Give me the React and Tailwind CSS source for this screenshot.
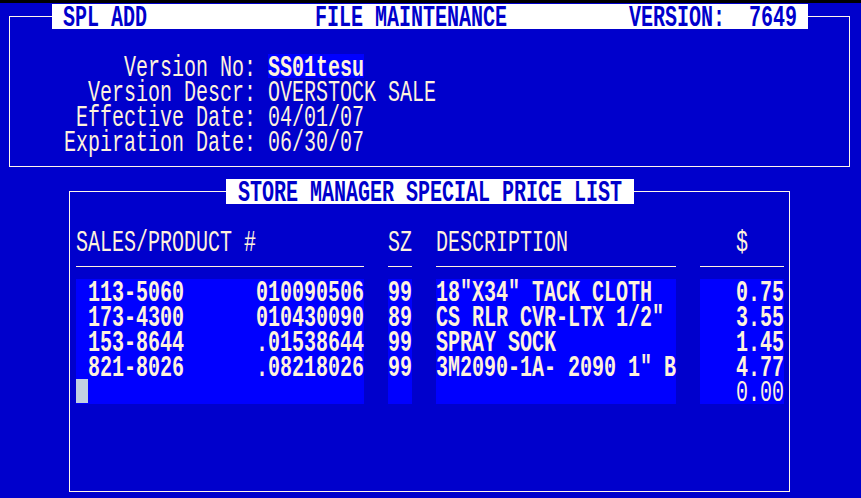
import React from "react";

function T({ children, bold }) {
  return (
    <span
      className={
        bold
          ? "inline-block h-[16px] leading-[16px] whitespace-pre scale-y-150 translate-y-[1.5px] font-bold"
          : "inline-block h-[16px] leading-[16px] whitespace-pre scale-y-150 translate-y-[1.5px]"
      }
    >
      {children}
    </span>
  );
}

const rows = [
  ["113-5060", "010090506", "99", '18"X34" TACK CLOTH', "0.75"],
  ["173-4300", "010430090", "89", 'CS RLR CVR-LTX 1/2"', "3.55"],
  ["153-8644", ".01538644", "99", "SPRAY SOCK", "1.45"],
  ["821-8026", ".08218026", "99", '3M2090-1A- 2090 1" B', "4.77"],
];

const fields = [
  ["Version No:", "SS01tesu", true],
  ["Version Descr:", "OVERSTOCK SALE", false],
  ["Effective Date:", "04/01/07", false],
  ["Expiration Date:", "06/30/07", false],
];

export default function App() {
  return (
    <div className="w-[861px] h-[498px] overflow-hidden bg-[#0000cc] text-[#fff2dc] font-['Liberation_Mono',monospace] text-[20px] leading-[25px]">
      <div className="h-[3px] bg-black" />

      {/* Top panel */}
      <fieldset className="mt-[1px] ml-[9px] w-[841px] border border-[#fff6ea] pt-[25px] pb-[12px]">
        <legend className="ml-[42px] w-[756px] h-[25px] bg-white text-[#0000cc] flex items-center pl-[11px]">
          <T bold>SPL ADD</T>
          <span className="ml-[168px] flex items-center">
            <T bold>FILE MAINTENANCE</T>
          </span>
          <span className="ml-[122px] flex items-center">
            <T bold>VERSION:  7649</T>
          </span>
        </legend>
        <div className="grid grid-cols-[246px_1fr] gap-x-[12px]">
          {fields.map(([label, value, hl]) => (
            <React.Fragment key={label}>
              <div className="h-[25px] text-right">
                <T>{label}</T>
              </div>
              <div className="h-[25px]">
                {hl ? (
                  <span className="inline-block align-top h-[24px] bg-[#0000ff]">
                    <T bold>{value}</T>
                  </span>
                ) : (
                  <T>{value}</T>
                )}
              </div>
            </React.Fragment>
          ))}
        </div>
      </fieldset>

      {/* Price list panel */}
      <fieldset className="mt-[12px] ml-[69px] w-[721px] border border-[#fff6ea] pt-[25px] pb-[87px] pl-[6px]">
        <legend className="ml-[150px] w-[408px] h-[25px] bg-white text-[#0000cc] pl-[12px] flex items-center">
          <T bold>STORE MANAGER SPECIAL PRICE LIST</T>
        </legend>

        <div className="grid grid-cols-[288px_24px_240px_84px] gap-x-[24px]">
          <div className="h-[25px]">
            <T>SALES/PRODUCT #</T>
          </div>
          <div className="h-[25px]">
            <T>SZ</T>
          </div>
          <div className="h-[25px]">
            <T>DESCRIPTION</T>
          </div>
          <div className="h-[25px] pl-[36px]">
            <T>$</T>
          </div>
        </div>

        <div className="grid grid-cols-[288px_24px_240px_84px] gap-x-[24px] my-[12px]">
          <div className="h-px bg-[#fff2dc]" />
          <div className="h-px bg-[#fff2dc]" />
          <div className="h-px bg-[#fff2dc]" />
          <div className="h-px bg-[#fff2dc]" />
        </div>

        <div className="grid grid-cols-[288px_24px_240px_84px] gap-x-[24px]">
          {rows.map((r) => (
            <React.Fragment key={r[0]}>
              <div className="h-[25px] bg-[#0000ff] flex items-center justify-between pl-[12px]">
                <T bold>{r[0]}</T>
                <T bold>{r[1]}</T>
              </div>
              <div className="h-[25px] bg-[#0000ff]">
                <T bold>{r[2]}</T>
              </div>
              <div className="h-[25px] bg-[#0000ff]">
                <T bold>{r[3]}</T>
              </div>
              <div className="h-[25px] bg-[#0000ff] text-right">
                <T bold>{r[4]}</T>
              </div>
            </React.Fragment>
          ))}
          <div className="h-[25px] bg-[#0000ff] flex">
            <div className="w-[12px] h-[24px] bg-[#c0d0e2]" />
          </div>
          <div className="h-[25px] bg-[#0000ff]" />
          <div className="h-[25px] bg-[#0000ff]" />
          <div className="h-[25px] bg-[#0000ff] text-right">
            <T>0.00</T>
          </div>
        </div>
      </fieldset>
    </div>
  );
}
